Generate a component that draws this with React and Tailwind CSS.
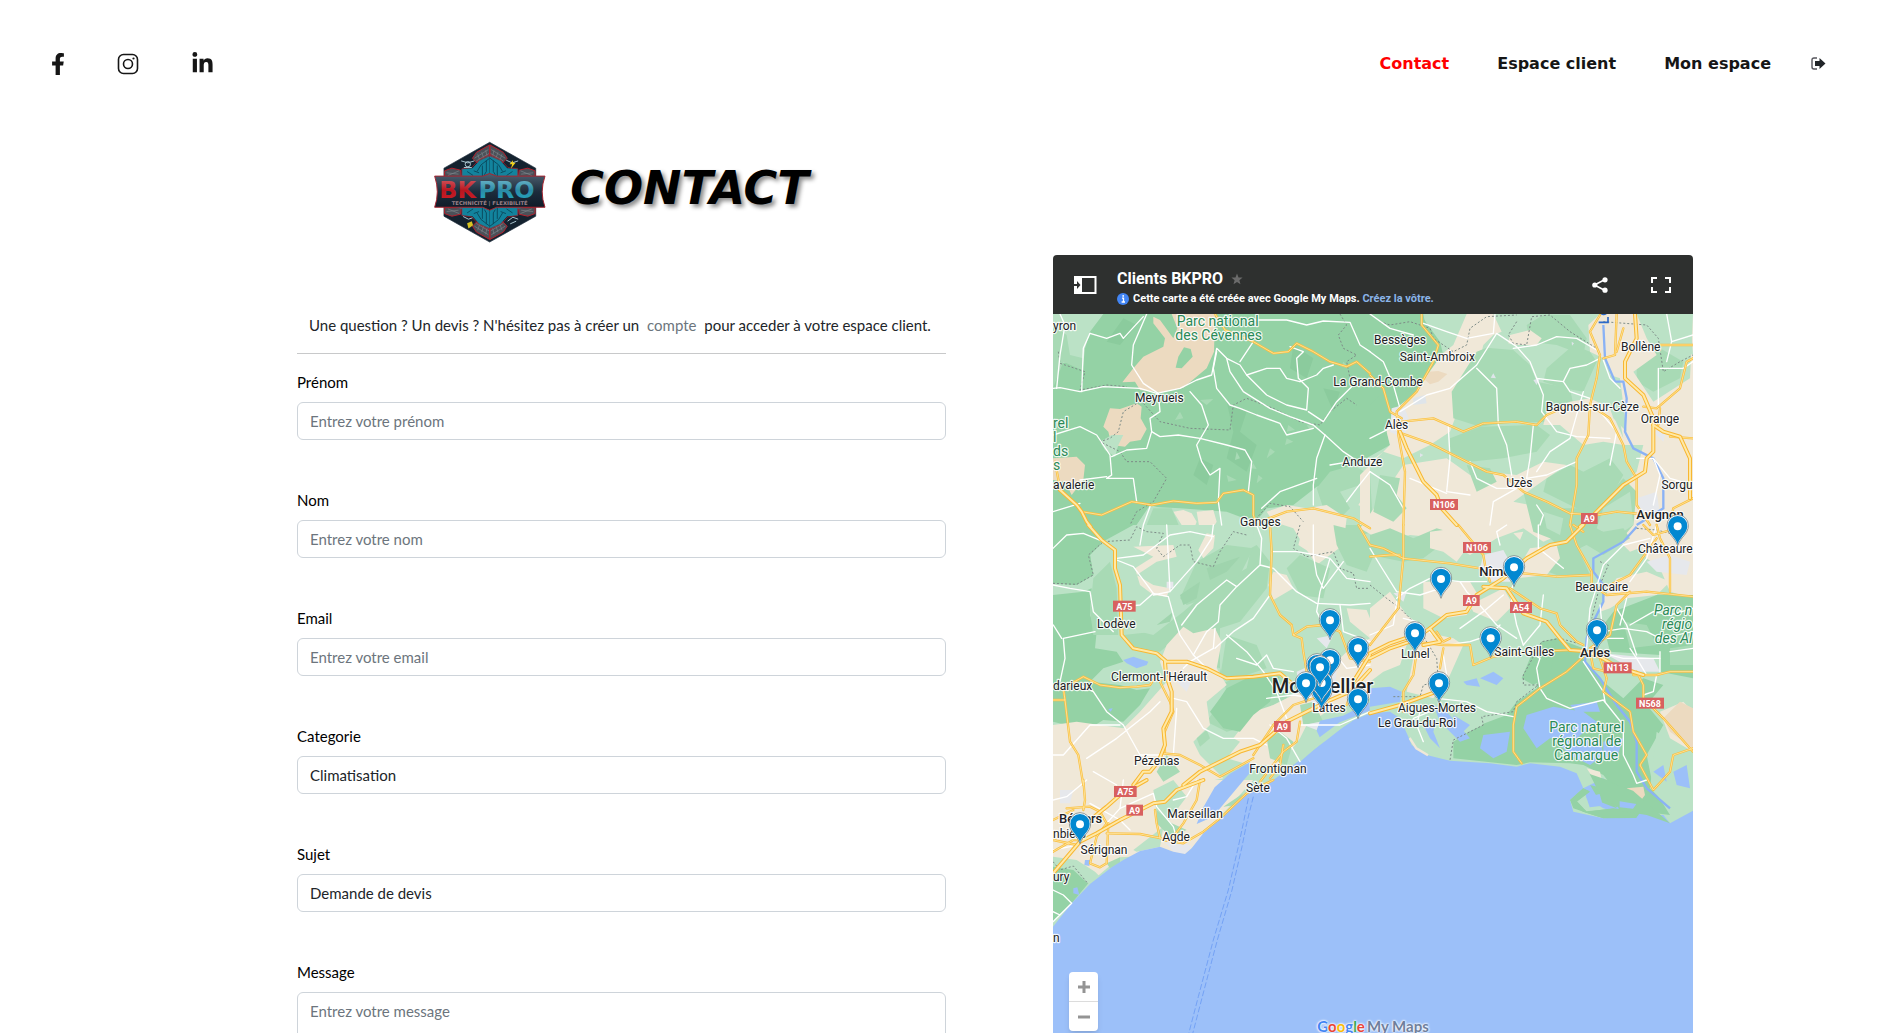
import React from "react";
import { FaFacebookF, FaLinkedinIn } from "react-icons/fa";

/* The map is drawn in five sheets; each has its own origin in the map's units. */
const SHEETS = {
  nw: "translate(-39 -207)",
  ne: "translate(951 -207)",
  w: "translate(-39 633)",
  e: "translate(951 633)",
  s: "translate(-39 1398)",
};

const LIGHT = "#bbe2c6";
const MID = "#a8dab5";
const DARK = "#94d2a5";
const SAND = "#f0e8d8";
const TAN = "#ecdac0";
const WATER = "#9cc0f9";
const URBAN = "#e6e8ec";

const AREAS = {
  nw: [
    [DARK, "M39 207H1140L1200 290 1215 350 1160 420 1080 480 1040 560 1050 600 960 650 930 700 830 725 760 780 680 790 640 840 480 800 400 800 330 780 290 840 280 860 180 900 150 930 160 990 110 1020 39 1015Z"],
    [LIGHT, "M39 207H190L150 260 135 310 128 375 95 350 60 355 39 390Z"],
    [MID, "M39 240L80 270 90 330 130 340 125 375 70 350 39 430Z"],
    [TAN, "M340 215L360 225 400 280 412 250 395 207H525L522 320 500 370 430 428 365 442 300 435 285 410 247 412 280 370 310 335 370 305 375 280 340 235Z"],
    [DARK, "M432 307L452 312 458 335 425 370 407 368 415 335Z"],
    [TAN, "M210 490L240 492 290 475 305 485 302 520 320 552 302 585 270 590 255 605 215 600 205 560 190 545Z"],
    [LIGHT, "M180 590L215 570 250 570 235 600 225 635 195 615Z"],
    [TAN, "M39 640L110 635 135 660 130 705 95 750 75 710 39 705Z"],
    [MID, "M830 730L870 680 940 660 990 690 1000 860 930 880 880 850 820 860 850 790Z"],
    [LIGHT, "M900 740L960 720 990 700V840H880L930 790Z"],
    [LIGHT, "M290 840L330 785 420 790 560 800 640 830V870H290Z"],
    [SAND, "M400 800L430 795 455 805 470 830 455 870 425 840Z M470 800L520 795 530 830 500 880 480 860Z M680 800L740 780 800 790 860 780 920 820 910 900 830 960 790 900 760 850 700 830Z"],
    [SAND, "M965 690L990 680V800L955 780 980 740Z"],
    [MID, "M340 790L395 790 420 850 350 870 320 840Z"],
    ["#8bcb9d", "M560 470L620 500 600 560 650 600 620 680 560 640 580 560Z M760 300L820 340 800 400 750 370Z M480 640L520 660 500 720 460 690Z M850 430L900 440 880 500Z M250 220L290 240 240 300 200 290Z"],
    [MID, "M690 610L705 620 680 640Z M745 540L765 555 740 560Z M590 620L600 640 585 645Z M655 690L668 700 650 715Z M480 465L520 462 500 480Z M800 540L830 545 810 555Z M740 580L760 590 735 600Z M640 655L650 672 630 670Z M910 350L930 370 905 365Z M560 690L590 705 565 710Z M420 500L430 520 405 525Z"],
  ],
  ne: [
    [SAND, "M290 207H370L395 260 370 270 340 300 320 380 250 440 255 520 240 560 180 600 100 640 40 620 0 650V840H-30V690L60 600 50 560 80 490 140 440 200 340 250 300Z"],
    [TAN, "M175 380L205 378 232 387 205 410 180 418 160 400Z"],
    [MID, "M320 320L350 308 430 315 480 360 500 410 600 430 610 480 530 530 400 535 330 545 250 520 245 440Z"],
    [MID, "M470 240L520 210 600 210 650 280 640 330 560 300 480 290Z M530 370L610 300 660 320 680 350 640 440 580 430 520 410Z"],
    [MID, "M240 580L330 545 500 540 540 570 500 620 400 640 300 650 240 620Z"],
    [MID, "M530 700L600 660 640 680 720 640 760 690 720 760 640 800 520 740Z"],
    [MID, "M800 340L870 310 940 350 930 400 850 440 800 410Z"],
    [DARK, "M0 207H160L170 260 205 300 200 350 150 420 80 460 30 450 0 480Z"],
    [SAND, "M420 270L480 255 515 280 500 300 440 300 415 295Z"],
    [SAND, "M655 240L690 207H800L830 280 860 330 790 380 850 470 960 400 969 207 969 910 860 890 780 920 700 840 760 720 800 680 820 600 760 600 700 590 640 600 570 540 520 540 530 500 600 470 660 460 720 490 760 580 720 380 700 340 660 320Z"],
    [LIGHT, "M690 380L750 400 770 560 730 520 700 430Z M830 207L960 207 969 330 860 280Z"],
    [SAND, "M100 660L230 640 300 690 350 680 440 690 520 650 590 660 530 700 430 770 480 780 600 810 590 860 520 890 460 850 380 880 300 930 220 880 120 870 40 890 -30 850 60 720Z"],
    [MID, "M30 690L90 700 80 750 110 790 70 830 10 800Z M290 660L360 670 380 710 320 740Z"],
    [MID, "M460 740L560 790 640 790 700 770 760 700 800 740 790 840 740 900 660 890 600 930 540 880 490 860Z"],
    [LIGHT, "M700 790L780 740 790 840 730 880 680 850Z M520 800L580 820 570 870 530 850Z"],
    [URBAN, "M65 490L100 480 120 530 100 580 60 560Z M850 560L890 550 880 590Z M800 760L860 740 870 810 820 830Z"],
    ["#dfe5ea", "M370 385L378 400 362 398Z M490 405L510 400 500 420Z M130 460L165 450 170 475 130 480Z M150 625L160 630 150 637Z M605 290L612 295 606 302Z"],
  ],
  w: [
    [DARK, "M39 0H275L180 55 150 90 160 150 110 180 39 175Z"],
    [DARK, "M39 210L130 200 155 190 150 270 170 320 165 370 230 380 250 410 190 430 150 470 240 480 290 495 330 490 300 540 250 590 190 585 150 610 80 600 39 590Z"],
    [MID, "M160 160L210 110 230 190 235 330 160 330 150 260Z M250 330L340 320 400 220 520 130 650 60 690 110 680 190 600 290 540 310 540 480 600 450 700 445 750 470 740 520 700 540 640 600 560 620 500 590 560 500 540 430 460 410 420 330 360 380 270 370Z"],
    [LIGHT, "M180 55L280 0H600L640 40 620 130 500 200 430 260 340 330 260 310 250 190 230 80Z"],
    [MID, "M470 110L560 60 640 70 600 150 500 220 440 240 420 220Z M780 90L870 130 850 220 780 210 740 130Z M560 330L650 360 680 430 620 450 540 460Z"],
    [MID, "M880 0L960 20 1010 70 980 140 920 120 890 60Z"],
    [SAND, "M500 25L525 30 520 70 490 100 475 75Z M280 65L400 60 410 95 350 110 290 150 340 180 390 190 380 215 340 210 300 180 285 130 340 95Z M700 140L740 150 760 190 700 225 685 180Z M790 0H880V60L830 95 775 60Z M920 250L980 255 990 280V340L930 290Z"],
    [SAND, "M430 305L460 325 525 310 545 350 530 430 560 480 500 530 510 600 460 650 480 690 550 760 450 780H39V600L110 590 180 600 250 610 300 560 380 470 360 410 380 360Z"],
    [SAND, "M640 560L700 540 800 490 860 440 920 380 990 340V520L860 560 800 600 780 640 720 720 630 720 560 700 600 650 580 640Z"],
    [DARK, "M510 560L540 520 560 490 620 460 720 455 700 490 690 530 640 570 600 620 550 610Z"],
    [MID, "M470 640L500 615 510 640 480 665Z M680 640L720 620 760 650 740 720 690 700Z M380 690L420 740 370 770 350 740Z M780 540L820 530 850 590 790 600Z"],
    [URBAN, "M770 440L860 400 890 440 880 520 830 540 780 510Z M830 340L880 330 860 370Z M380 170H400V190H380Z M400 460L460 455 440 500Z M790 600L840 590 830 615Z"],
    [WATER, "M250 405L280 395 325 410 320 420 290 430 260 415Z M205 552L218 550 212 560Z"],
    ["#9fd4ad", "M500 130L600 95 560 140 510 165Z M420 210L480 170 470 220 430 240Z M400 260L350 300 390 290Z"],
  ],
  e: [
    [MID, "M0 30L60 10 130 40 200 10 270 30 280 60 200 70 160 100 100 110 0 90Z M640 0L700 20 760 10 780 40 700 90 650 60 600 80 560 40Z M500 70L620 60 660 150 560 150 480 120Z"],
    [SAND, "M180 20L260 10 290 70 260 110 220 80 180 70Z M430 25L460 20 450 45Z M480 70L560 60 570 100 530 150 440 160 450 120Z M160 170L300 170 330 220 290 270 220 280 160 250Z M0 250L60 200 110 270 190 330 120 330 90 420 40 440 0 470Z M300 240L400 190 430 240 380 290 310 260Z M160 320L250 340 280 360 240 450 190 520 110 500 130 400Z M740 160L830 140 900 170 860 210 770 220 720 250 690 260 700 220Z M790 30L850 10 900 30 969 10V220L900 200 870 130 830 100Z"],
    [URBAN, "M340 90L400 75 430 130 420 170 360 170 330 130Z M830 110L900 90 960 110 950 150 860 140Z M700 385L850 400 870 440 800 440 730 400Z M70 205L110 200 100 230Z"],
    [DARK, "M860 210H969V460L870 440 870 390 720 380 700 300 730 260Z"],
    [MID, "M760 290L830 300 860 360 780 370Z M900 370L969 360V420H900Z"],
    [DARK, "M515 350L560 340 640 370 640 400 700 470 760 520 820 460 880 480 830 540 880 600 830 690 850 790 900 870 820 860 740 800 700 750 640 720 600 715 480 712 440 720 250 700 250 650 330 600 410 570 440 530 500 490 505 400Z"],
    [DARK, "M455 460L480 400 515 350 560 350 540 450 490 480Z"],
    [LIGHT, "M150 540L300 570 340 600 250 640 230 700 160 680 120 640 90 560Z"],
    [LIGHT, "M860 620L940 680 969 700V830L900 850 840 790Z"],
    [SAND, "M650 730L690 740 700 790 740 830 700 790 670 760Z M870 560L940 530 969 560V680L900 640Z"],
    [TAN, "M880 580L930 530 969 550V670L900 620Z M770 790L820 785 825 810 810 830Z"],
    [WATER, "M280 470L320 460 330 485 290 480Z M330 460L370 440 400 460 380 480Z M0 490L60 485 95 500 90 530 0 545Z M470 570L550 545 640 560 680 590 620 640 540 640 500 670 460 610Z M340 630L420 620 410 680 370 700 330 670Z M250 570L300 600 260 640Z M560 650L690 640 700 690 660 720 600 690Z M160 600L200 580 190 620 210 670 180 640Z M190 540L230 560 300 640 270 650 210 590Z M700 650L760 640 740 700 700 700Z M600 540L680 530 690 560 620 560Z M910 740L950 720 960 790 920 780Z M850 740L880 720 890 770Z"],
    [WATER, "M640 790L700 760 740 810 820 830 870 870 800 880 700 850 650 820Z"],
    [DARK, "M600 825L640 790 660 800 620 830 650 860 730 850 810 860 800 880 700 880 640 860 610 850Z M660 780L700 790 740 850 690 830Z M720 790L780 800 840 860 750 850Z"],
  ],
  s: [
    [DARK, "M39 250L90 255 145 310 95 370 39 425Z"],
    [LIGHT, "M39 230L110 240 165 275 180 290 145 312 100 270 39 260Z M280 210L370 140 360 200 290 215Z M340 30L400 0 440 50 380 130 350 100Z"],
    [MID, "M200 250L240 232 240 250 210 265Z M350 90L395 130 440 150 390 170 350 130Z M550 80L610 40 590 75Z"],
    [URBAN, "M370 180L420 180 455 200 435 222 400 215Z M60 30L100 30 90 70 60 70Z"],
    [WATER, "M135 240L150 240 148 258 133 255Z M100 325L112 322 118 345 100 340Z"],
  ],
};

const SEA =
  "M0 1838L56 1768 111 1710 176 1660 211 1638 261 1611 321 1598 361 1613 396 1620 416 1603 451 1558 501 1513 571 1443 620 1425 665 1395 741 1338 821 1278 891 1223 951 1198 1011 1193 1041 1213 1066 1268 1076 1293 1121 1323 1191 1340 1311 1348 1391 1358 1431 1348 1521 1358 1571 1378 1591 1423 1551 1458 1561 1493 1651 1513 1781 1503 1831 1503 1851 1528 1920 1490V2400H0Z M485 1420L530 1380 590 1345 605 1360 575 1395 480 1508 431 1530 451 1480Z M791 1250L801 1220 870 1205 950 1165 950 1190 860 1225 800 1270Z";

const LANES = {
  nw: [
    "M39 430L60 428 120 440 190 425 250 428 300 430 350 445 420 430 470 405 515 390 530 310 560 340 600 360 620 390 680 370 720 370 740 400 780 410",
    "M150 265L200 280 240 265 250 280 310 215",
    "M60 207L75 240 60 330 50 430M150 265L130 310 125 440",
    "M320 207L280 300 275 360 310 415 355 445 360 500 330 520 335 560 360 575 415 570 480 580 560 600 615 615 635 650 625 740",
    "M450 440L485 480 505 540 470 600 485 650 510 690 540 670 535 770 545 840",
    "M530 320L520 370 530 430 570 480 600 490 650 510 720 535 740 570 820 550",
    "M560 340L570 380 610 440 690 490 750 515 820 540 855 570 910 620 940 640",
    "M600 350L620 320 640 290M620 390L680 450 740 480 800 495 805 430 775 400 770 340 790 320 750 305",
    "M640 225H740L800 240 850 228 930 232 960 300 990 320",
    "M855 570L830 640 820 720 820 780M870 660L930 650M830 700L720 740 665 790",
    "M39 570L120 545 170 570 210 630 215 690 200 700 280 700 290 770",
    "M120 705L200 695M215 635L260 615 320 610 335 560M330 785L310 840 300 900",
    "M805 500L850 530 890 470 940 420M780 410L830 390 850 370 880 360",
    "M990 680L950 730 920 770M39 800L120 775",
  ],
  ne: [
    "M0 320L40 350 70 420 90 490M90 500L170 450 240 430 320 360 380 265 440 305 480 350 500 400 520 450 515 500",
    "M160 235L230 260 290 280 370 265 375 207M430 310L500 300 560 275 620 280 680 315",
    "M320 370L380 430 385 540 410 600 425 690M500 400L580 410 600 440 660 460M580 410L600 370 650 360 690 340",
    "M490 540L480 640 470 700 530 690 620 650M235 545L240 640 230 740 300 750M515 500L560 560 620 575 720 580",
    "M0 580L70 545 95 570M300 650L320 700 380 730 440 730M640 440L600 580 540 620 500 680",
    "M870 370H940L969 350M865 490V370M700 345L720 400 750 430M0 680L60 720 100 790 100 840M120 700L230 745",
    "M660 470L690 500 740 560 720 660M440 730L370 770 360 840M500 780L520 810 510 840",
    "M850 640L870 690 850 780M890 207L905 290 969 270M905 290L890 350",
    "M0 207L60 250 130 270M800 640L850 640 900 700 969 720",
  ],
  w: [
    "M39 70L80 30 130 25 190 50M230 100L310 90 390 30 450 20 520 35M230 105L280 125 340 205 300 240 250 245",
    "M39 180L90 190 150 200 160 260 220 320M70 340L165 320M70 340L75 400 60 470M65 340L40 300",
    "M520 0L515 40 470 110 390 200 340 210M380 0L390 200M340 205L385 215 400 270 420 330 460 390 500 430",
    "M425 300L470 240 560 165 590 185 540 240 535 290 500 320 460 390M590 185L660 120 665 40 650 0M660 120L700 130 770 200 830 235 930 240 990 235",
    "M700 80H770L830 90 870 100 920 160 990 170M870 100L840 200 830 260 870 340M820 0V90L830 150 850 190 910 110",
    "M525 370L580 320 640 280 690 210M560 330L620 380 670 440M525 310L520 370 450 410 430 430",
    "M250 600L200 560 160 500 120 480M140 700L230 640 330 560 360 530M250 600L300 690 370 690M160 740L230 780",
    "M400 520L440 530 490 610 550 640 640 640 680 660M410 550L400 690M240 600L150 600 70 690 39 690",
    "M590 400L650 420 680 390 700 430 760 440M670 440L710 500 740 580M680 520L760 510 820 520",
    "M690 600L740 640 780 710M780 600L850 600 900 600 990 560M900 240L910 320 990 350",
    "M880 380L920 430 990 420",
  ],
  e: [
    "M0 70L30 120 80 200 150 210 210 190M80 220L120 190 180 160 270 170M390 60L380 20 410 0M505 0V70L580 130",
    "M270 170L290 200 320 230 380 300 440 340M270 170H350M270 310L340 260 400 210M440 160L420 200 440 300 460 360",
    "M460 360L510 300 520 210M650 370L660 250 700 120 760 60 840 40M740 250L770 300 800 390M690 240L700 340 760 340",
    "M510 490L530 520 600 550 700 525 760 600 760 690 790 750 800 775 830 765M200 520L290 530 350 560 430 575M510 490L500 430 510 400 480 380",
    "M640 410L700 500 705 530M700 385L760 400 870 400M860 450L850 500 820 510M700 320L760 310 830 320 870 340 969 320",
    "M870 380L870 440M900 380L969 370M780 370L800 400 830 450M150 560L140 600 160 650M130 580L180 560M770 220L750 300",
    "M80 230L70 300 0 330M190 330L140 290 100 280M230 360L300 350 360 330 390 300",
    "M220 390L230 450 210 520M860 0L830 100 780 170M969 250L900 270 850 260 780 300",
  ],
  s: [
    "M39 330L70 345 95 370 39 425M39 395L60 405M340 40L350 80 400 140 410 175M240 85L340 40M150 70L240 120 270 150",
    "M39 210L90 200 120 190M39 60L80 50 140 0M470 0L440 50 400 60M250 0L240 85 200 130",
  ],
};

const TRUNKS = {
  nw: [
    "M525 207L555 255 640 290 700 325 745 320 770 295 820 320 870 350 920 365 950 350 990 385",
    "M125 800L185 810 275 770 335 780 400 768 470 775 530 772 550 745 610 735 640 750 640 810 650 840",
    "M660 830L740 800 820 790 860 800 940 820 990 850",
    "M45 650L60 730",
  ],
  ne: [
    "M155 207L155 240 205 300 190 350 140 440 80 500 85 570 105 680 100 840M0 390L40 430 60 500 95 520",
    "M95 530L190 520 280 560 340 535 440 530 500 540 530 510 600 480 660 485",
    "M95 565L180 595 260 635 350 680 400 690 460 740 530 770 600 805 680 810 740 800 840 810",
    "M690 210L660 260 690 330 680 400 660 480 655 570 620 640 620 720 600 840M740 207L735 330 700 340",
    "M740 320L760 250M820 485L860 490 930 430 950 350 969 340M870 300H969M660 480L720 520 760 600 770 650 800 700 800 780 840 840",
    "M870 490L865 540M969 580L900 575M900 840L910 790 969 760",
  ],
  w: [
    "M690 0L695 80 690 210 720 270 755 300 760 330 785 340 790 380 800 440M760 330L800 305 850 300 900 320 930 400 990 410",
    "M39 525L75 525 70 490 130 455 180 480 240 488 290 485 330 480 350 450M75 525L90 650 115 690 130 780",
    "M370 685L420 690 480 720 540 755 640 700M640 690L700 600 760 540 820 520M730 660L720 720 690 760",
    "M385 440L360 470 390 530 400 560 370 630 375 680M780 590L770 650 730 680 660 770",
    "M955 0L990 60M940 480L920 540",
  ],
  e: [
    "M0 60L40 70 100 100 240 115 330 130M100 0L100 100 85 250 0 360M265 0L340 90 345 120 360 170M0 95L60 90 90 90",
    "M460 145L560 155 660 150M600 0L620 60 665 140 665 180 710 210 830 200 969 215M610 0L640 20",
    "M420 190L510 250 560 265 570 300 620 350 640 360M370 395L310 420 300 360 220 360 130 350M370 395L480 380 600 375",
    "M640 395L590 440 510 490 440 545 430 600 430 680 455 715M690 400L710 460 700 500 780 560 790 620 830 690 810 720 850 795 900 740 910 690 969 670",
    "M220 370L210 430M140 380L130 450 100 500 100 560M200 320L220 350 240 340M660 380L670 430 710 440",
    "M800 440L820 480 820 520 880 580 969 680M790 450L860 450 900 440 969 440M710 185L780 150 860 40M860 0L870 40 900 100 900 200",
    "M780 200L740 240 720 330 660 370M820 0L850 30 920 10",
  ],
  s: [
    "M80 85L150 80 180 95 200 130 170 170 150 250 180 262 200 250 205 130M200 160L300 162 365 175M345 90L350 130 360 175",
    "M130 0L135 60 130 90M480 0L470 60 430 130 400 170M370 180L430 190 490 155 540 115 620 40 700 0",
    "M39 120L100 90M39 215L100 180 120 180M39 180L110 195",
  ],
};

const MOTORWAYS = {
  nw: ["M60 735L110 780 125 800 140 830 152 845"],
  ne: [
    "M795 207L800 280 765 350 765 400 820 450 850 520 850 620 830 640 825 680 760 720 700 780 660 820 630 845",
    "M850 540L880 560 930 575 960 640 960 760",
    "M90 560L110 610 135 660 160 710 200 750 215 790 260 840",
  ],
  w: [
    "M145 0L185 45 225 75 225 130 240 180 245 330 280 370 350 385 380 410 440 410 500 430 560 460 640 455 720 445 750 470",
    "M375 410L378 450 395 500 395 560 370 610 375 660 355 710 330 740 310 740 280 780",
    "M430 780L480 740 520 720 600 680 660 660 740 590 810 555 860 530 930 500 990 435",
    "M940 470L990 390",
  ],
  e: [
    "M0 400L60 370 120 350 180 310 230 270 290 260 320 210 400 160 470 100 540 60 590 50 640 0",
    "M340 185L410 190 460 265 530 290 570 340 600 375 640 378 690 395 740 425 820 450",
    "M0 385L60 355 120 335M180 310L210 350 160 360",
    "M0 565L90 540 200 500",
  ],
  s: [
    "M39 280L120 185 170 160 240 120 340 70 375 65 410 30 490 0",
    "M320 0L240 45 200 80 150 120 120 160",
  ],
};

const BORDERS = {
  nw: [
    "M55 320L60 355 135 380 120 435 200 420 260 425M300 470L250 500 235 560 210 580 180 590 240 620 260 650 330 650 380 700 340 770 290 800 270 840",
    "M310 475L360 530 450 550 570 555 580 480 620 460 700 490 780 530 840 540 870 500 920 460 950 480",
    "M900 207L920 240 895 270 910 310 950 330 920 350 930 400",
    "M640 830L690 775 750 785 790 830",
  ],
  ne: ["M30 230L60 240 120 230 180 250 190 280 250 320 290 300 300 250 350 215 440 210", "M440 230L415 270 430 295 470 300 485 215 540 210 600 260 680 310", "M700 230L830 240 865 280 880 380 930 350 969 330"],
  w: ["M39 175L110 178 160 150 145 90 190 50 270 45 290 5 320 20 370 25 350 70 370 95 420 60 450 60 460 110 520 125 540 80 580 20 620 30", "M780 0L760 70 800 95 880 80 900 130 940 145 950 190 990 190"],
  e: ["M0 180L50 220 90 250 140 300 200 400 205 470 160 480 150 515 70 515", "M640 360L570 340 515 350 460 450 460 480 505 480 440 530 430 560 335 575 340 600 250 645 240 705", "M800 10L860 15 920 30M690 110L715 120 690 180 665 280"],
  s: ["M39 245L60 270 100 258 145 312"],
};

const RIVERS = [
  ["ne", "M700 240L705 340 735 410 760 410 770 460 765 560 790 610 850 640 880 700 880 790 800 840"],
  ["e", "M800 5L760 50 670 100 670 140 700 180 700 230 670 290 650 340 645 410 690 460 740 540 780 590 800 650 800 740 830 790 900 850"],
];

const PLACES = {
  nw: [
    [39, 255, "yron", "start"],
    [358, 472, "Meyrueis"],
    [880, 424, "La Grand-Combe", "start"],
    [907, 664, "Anduze", "start"],
    [39, 732, "avalerie", "start"],
    [661, 843, "Ganges"],
  ],
  ne: [
    [90, 298, "Bessèges"],
    [202, 349, "Saint-Ambroix"],
    [812, 318, "Bollène"],
    [667, 499, "Bagnols-sur-Cèze"],
    [870, 535, "Orange"],
    [80, 553, "Alès"],
    [448, 727, "Uzès"],
    [968, 733, "Sorgu", "end"],
  ],
  w: [
    [229, 309, "Lodève"],
    [357, 469, "Clermont-l'Hérault"],
    [39, 496, "darieux", "start"],
    [350, 720, "Pézenas"],
    [714, 745, "Frontignan"],
    [867, 561, "Lattes"],
  ],
  e: [
    [968, 84, "Châteaure", "end"],
    [695, 198, "Beaucaire"],
    [136, 399, "Lunel"],
    [463, 393, "Saint-Gilles"],
    [201, 561, "Aigues-Mortes"],
    [141, 607, "Le Grau-du-Roi"],
  ],
  s: [
    [654, 36, "Sète"],
    [465, 114, "Marseillan"],
    [408, 184, "Agde"],
    [192, 222, "Sérignan"],
    [39, 174, "nbiers", "start"],
    [39, 304, "ury", "start"],
    [39, 487, "n", "start"],
  ],
};

const CITIES = {
  ne: [[870, 821, "Avignon"]],
  e: [
    [328, 154, "Nîmes", "start"],
    [675, 396, "Arles"],
  ],
  s: [[122, 130, "Béziers"]],
};

const PARKS = {
  nw: [
    [533, 243, "Parc national"],
    [536, 286, "des Cévennes"],
    [39, 549, "rel", "start"],
    [39, 591, "l", "start"],
    [39, 633, "ds", "start"],
    [39, 675, "s", "start"],
  ],
  e: [
    [650, 621, "Parc naturel"],
    [650, 664, "régional de"],
    [648, 706, "Camargue"],
  ],
};

const ITALIC_PARKS = {
  e: [
    [967, 269, "Parc n", "end"],
    [967, 311, "régio", "end"],
    [967, 353, "des Al", "end"],
  ],
};

const SHIELDS = {
  ne: [
    [222, 779, "N106", 84],
    [658, 821, "A9", 50],
  ],
  w: [
    [253, 244, "A75", 68],
    [727, 605, "A9", 50],
  ],
  e: [
    [321, 68, "N106", 84],
    [304, 227, "A9", 50],
    [453, 248, "A54", 66],
    [743, 429, "N113", 84],
    [840, 535, "N568", 84],
  ],
  s: [
    [256, 35, "A75", 68],
    [284, 91, "A9", 50],
  ],
};

const PINS = [
  ["w", 870, 340],
  ["w", 870, 460],
  ["w", 831, 475],
  ["w", 954, 424],
  ["w", 845, 550],
  ["w", 845, 528],
  ["w", 798, 529],
  ["w", 840, 481],
  ["w", 954, 577],
  ["e", 213, 216],
  ["e", 432, 181],
  ["e", 135, 379],
  ["e", 362, 394],
  ["e", 207, 529],
  ["e", 681, 370],
  ["e", 923, 58],
  ["s", 120, 187],
];

function Sheets({ data, children }) {
  return Object.entries(data).map(([key, items]) => (
    <g key={key} transform={SHEETS[key]}>
      {items.map((item, i) => (
        <React.Fragment key={i}>{children(item)}</React.Fragment>
      ))}
    </g>
  ));
}

function Roads({ data, color, width }) {
  return (
    <g fill="none" stroke={color} strokeWidth={width} strokeLinejoin="round" strokeLinecap="round">
      <Sheets data={data}>{(d) => <path d={d} />}</Sheets>
    </g>
  );
}

function Labels({ data, size, color, weight }) {
  return (
    <g
      fontSize={size}
      fontWeight={weight}
      fill={color}
      stroke="#fff"
      strokeOpacity="0.85"
      strokeWidth="7"
      strokeLinejoin="round"
      paintOrder="stroke"
    >
      <Sheets data={data}>
        {([x, y, text, anchor]) => (
          <text x={x} y={y} textAnchor={anchor || "middle"}>
            {text}
          </text>
        )}
      </Sheets>
    </g>
  );
}

function MapDrawing() {
  return (
    <svg
      viewBox="0 0 1920 2178"
      preserveAspectRatio="xMidYMin slice"
      className="block h-full w-full font-[Roboto,sans-serif]"
      role="img"
      aria-label="Carte des clients"
    >
      <rect width="1920" height="2400" fill={LIGHT} />
      <Sheets data={{ s: [SAND] }}>{(c) => <path fill={c} d="M39 0H640L440 222 240 232 145 312 39 240Z" />}</Sheets>
      <Sheets data={AREAS}>{([fill, d]) => <path fill={fill} d={d} />}</Sheets>
      <path d={SEA} fill={WATER} />
      <g fill={DARK}>
        <path d="M1551 1458L1590 1423 1610 1432 1572 1462 1600 1492 1680 1484 1762 1492 1750 1512 1651 1513 1590 1493Z" />
        <path d="M1610 1380L1670 1400 1740 1460 1690 1480 1640 1440Z M1660 1400L1740 1430 1851 1528 1781 1503 1700 1490Z" />
      </g>
      <g fill={WATER}>
        <path d="M1600 1450L1640 1440 1650 1475 1610 1480Z M1700 1462L1750 1470 1740 1484 1700 1480Z" />
      </g>
      <path d="M740 1340L830 1262 895 1220" stroke={LIGHT} strokeWidth="6" fill="none" />
      <path d="M1070 1272L1090 1303 1125 1324" stroke={SAND} strokeWidth="7" fill="none" />
      <g fill="none" strokeWidth="7" stroke="#8ab2f5">
        {RIVERS.map(([key, d]) => (
          <path key={key} d={d} transform={SHEETS[key]} />
        ))}
      </g>
      <g fill="none" stroke="#7d8b87" strokeWidth="3" strokeDasharray="6 6">
        <Sheets data={BORDERS}>{(d) => <path d={d} />}</Sheets>
      </g>
      <Roads data={LANES} color="#ffffff" width={4} />
      <Roads data={TRUNKS} color="#fabf3e" width={7} />
      <Roads data={TRUNKS} color="#fff0bd" width={2} />
      <Roads data={MOTORWAYS} color="#f8b732" width={12} />
      <Roads data={MOTORWAYS} color="#ffe9a6" width={6} />
      <g transform={SHEETS.s} fill="none" stroke="#74a2f5" strokeWidth="3" strokeDasharray="18 7">
        <path d="M625 55L610 130 595 200 565 330 520 480 475 650 445 765" />
        <path d="M640 50L620 130 606 200 576 330 532 480 487 650 457 765" />
      </g>
      <g transform={SHEETS.ne} fill="none" stroke="#2b69c9" strokeWidth="5">
        <path d="M714 216V232H686M710 190A8 8 0 1 1 692 204" />
      </g>
      <g fontSize="27" fontWeight="700" fill="#fff" textAnchor="middle">
        <Sheets data={SHIELDS}>
          {([x, y, text, w]) => (
            <>
              <rect x={x - w / 2} y={y - 17} width={w} height="33" fill="#d8605f" />
              <text x={x} y={y + 10}>
                {text}
              </text>
            </>
          )}
        </Sheets>
      </g>
      <Labels data={PARKS} size={42} color="#2b8a57" weight={400} />
      <g fontStyle="italic">
        <Labels data={ITALIC_PARKS} size={42} color="#2b8a57" weight={400} />
      </g>
      <Labels data={PLACES} size={36} color="#202124" weight={400} />
      <Labels data={CITIES} size={39} color="#202124" weight={500} />
      <Labels data={{ w: [[695, 503, "Montpellier", "start"]] }} size={60} color="#202124" weight={500} />
      {PINS.map(([key, x, y]) => (
        <g key={`${key}${x}-${y}`} transform={SHEETS[key]}>
          <g transform={`translate(${x} ${y})`}>
            <path
              d="M0 4C-8 -22 -32 -30 -32 -57A32 32 0 0 1 32 -57C32 -30 8 -22 0 4Z"
              fill="#fff"
              stroke="#5f6b70"
              strokeWidth="2"
            />
            <path d="M0 0C-6 -22 -29 -32 -29 -56A29 29 0 0 1 29 -56C29 -32 6 -22 0 0Z" fill="#0288d1" />
            <circle cy="-54" r="12" fill="#fff" />
          </g>
        </g>
      ))}
    </svg>
  );
}

function Badge() {
  const quarter = (
    <>
      <path d="M124 60L136 42 176 20V54L138 74Z" fill="#4b5058" stroke="#b5202c" strokeWidth="3" />
      <path d="M130 60L172 34M136 68L174 46M140 48L146 66M152 42L158 60M164 36L168 54" stroke="#7d858c" strokeWidth="2" />
      <path d="M40 98L62 90 88 96 90 116H40Z" fill="#4b5058" stroke="#b5202c" strokeWidth="3" />
      <path d="M46 104L82 108M50 112L84 98" stroke="#7d858c" strokeWidth="2" />
      <path d="M92 92L124 90 144 68 176 54V118H70L92 112Z" fill="#12839d" />
      <path d="M176 60L150 80 138 100M166 66V100M154 82V116M128 98L144 104M108 100L126 112M166 100L160 110" stroke="#0b4c60" strokeWidth="3" fill="none" />
      <path d="M92 116V92L122 88 142 66 176 48" stroke="#b5202c" strokeWidth="2" fill="none" />
    </>
  );
  return (
    <svg viewBox="8 8 338 308" className="w-28 shrink-0" role="img" aria-label="BKPRO">
      <defs>
        <linearGradient id="plate" x1="0" y1="0" x2="0" y2="1">
          <stop offset="0" stopColor="#4e6070" />
          <stop offset="0.5" stopColor="#1c2c3c" />
          <stop offset="1" stopColor="#0d1824" />
        </linearGradient>
        <linearGradient id="blueText" x1="0" y1="0" x2="0" y2="1">
          <stop offset="0" stopColor="#7bbdd0" />
          <stop offset="0.5" stopColor="#2b8ba6" />
          <stop offset="1" stopColor="#1fb0c8" />
        </linearGradient>
        <linearGradient id="redText" x1="0" y1="0" x2="0" y2="1">
          <stop offset="0" stopColor="#d8646a" />
          <stop offset="0.5" stopColor="#b9161f" />
          <stop offset="1" stopColor="#d32029" />
        </linearGradient>
      </defs>
      <path d="M176 12L315 90V235L176 313 38 235V90Z" fill="#14222f" stroke="#1d2b39" strokeWidth="2" />
      {quarter}
      <g transform="matrix(-1 0 0 1 353 0)">{quarter}</g>
      <g transform="matrix(1 0 0 -1 0 325)">{quarter}</g>
      <g transform="matrix(-1 0 0 -1 353 325)">{quarter}</g>
      <g fill="none" stroke="#a9c4cf" strokeWidth="3">
        <circle cx="110" cy="78" r="8" />
        <path d="M90 68L110 74 130 68M98 88L122 88M226 66L244 74 262 68M96 236L112 244 124 240M230 250L246 238 262 244M238 258L256 250" />
      </g>
      <path d="M246 66L236 78H244L240 92 254 74H246Z" fill="#f2d21a" />
      <path d="M108 256L122 250 126 262 112 272Z" fill="#d8c422" />
      <path d="M10 114H155L176 106 197 114H343Q326 162 343 208H197L176 217 155 208H10Q26 162 10 114Z" fill="url(#plate)" stroke="#a52430" strokeWidth="3" />
      <g fontFamily="'DejaVu Sans', sans-serif" fontWeight="700">
        <text x="24" y="181" fontSize="72" fill="url(#redText)">
          BK
        </text>
        <text x="142" y="181" fontSize="72" fill="url(#blueText)">
          PRO
        </text>
        <text x="176" y="200" fontSize="16" fill="#9a8088" textAnchor="middle">
          TECHNICITÉ | FLEXIBILITÉ
        </text>
      </g>
    </svg>
  );
}

const controlClass =
  "block w-full appearance-none rounded-md border border-[#ced4da] bg-white px-3 text-[15px] leading-6 text-[#212529] placeholder:text-[#6c757d]";

function Field({ id, label, children }) {
  return (
    <div className="mb-12">
      <label htmlFor={id} className="mb-2 block leading-6 text-black">
        {label}
      </label>
      {children}
    </div>
  );
}

const NAV = [
  ["Contact", "text-[#ff0000]"],
  ["Espace client", "text-[#161616]"],
  ["Mon espace", "text-[#161616]"],
];

export default function App() {
  return (
    <div className="min-h-screen bg-white font-[Lato,sans-serif] text-[15px] text-[#212529]">
      <header className="flex h-[127px] items-center justify-between pr-[65px] pl-[50px]">
        <div className="flex items-center gap-[52px] text-[#161616]">
          <a href="#facebook" aria-label="Facebook" className="flex w-4 justify-center">
            <FaFacebookF size={22} />
          </a>
          <a href="#instagram" aria-label="Instagram" className="flex w-5 justify-center">
            <svg viewBox="0 0 22 22" className="size-[22px] shrink-0" fill="none" stroke="currentColor" strokeWidth="1.6">
              <rect x="1.500" y="1.500" width="19" height="19" rx="5" />
              <circle cx="11" cy="11" r="4.500" />
              <circle cx="16.500" cy="5.500" r="1.100" fill="currentColor" stroke="none" />
            </svg>
          </a>
          <a href="#linkedin" aria-label="LinkedIn" className="flex w-6 justify-center">
            <FaLinkedinIn size={23} />
          </a>
        </div>
        <nav className="flex items-center gap-12 font-['DejaVu_Sans',sans-serif] text-base font-bold">
          {NAV.map(([label, color]) => (
            <a key={label} href="#nav" className={color}>
              {label}
            </a>
          ))}
          <a href="#deconnexion" aria-label="Déconnexion" className="-ml-2">
            <svg viewBox="0 0 15 13" className="h-[13px] w-[15px]">
              <path d="M6 1H3Q1 1 1 3V10Q1 12 3 12H6" fill="none" stroke="#55555c" strokeWidth="1.4" />
              <path d="M4 4H8.500V1L14.500 6.500 8.500 12V9H4Z" fill="#212529" />
            </svg>
          </a>
        </nav>
      </header>

      <main className="flex items-start gap-[107px] pr-[198px] pl-[297px]">
        <section className="min-w-0 flex-[649]">
          <div className="flex items-start justify-center gap-6 pt-[14px]">
            <Badge />
            <h1 className="pt-6 font-['DejaVu_Sans',sans-serif] text-[46px] leading-none font-bold text-black italic [text-shadow:3px_3px_4px_rgba(0,0,0,0.45)]">
              CONTACT
            </h1>
          </div>
          <p className="mt-[70px] px-3 leading-6 whitespace-nowrap">
            Une question ? Un devis ? N'hésitez pas à créer un{" "}
            <a href="#compte" className="px-1 text-[#6c757d]">
              compte
            </a>{" "}
            pour acceder à votre espace client.
          </p>
          <hr className="my-4 border-[#c8c9ca]" />
          <form>
            <Field id="prenom" label="Prénom">
              <input id="prenom" type="text" placeholder="Entrez votre prénom" className={`${controlClass} h-[38px]`} />
            </Field>
            <Field id="nom" label="Nom">
              <input id="nom" type="text" placeholder="Entrez votre nom" className={`${controlClass} h-[38px]`} />
            </Field>
            <Field id="email" label="Email">
              <input id="email" type="email" placeholder="Entrez votre email" className={`${controlClass} h-[38px]`} />
            </Field>
            <Field id="categorie" label="Categorie">
              <select id="categorie" className={`${controlClass} h-[38px]`}>
                <option>Climatisation</option>
              </select>
            </Field>
            <Field id="sujet" label="Sujet">
              <select id="sujet" className={`${controlClass} h-[38px]`}>
                <option>Demande de devis</option>
              </select>
            </Field>
            <Field id="message" label="Message">
              <textarea
                id="message"
                rows={4}
                placeholder="Entrez votre message"
                className={`${controlClass} resize-none py-1.5`}
              />
            </Field>
          </form>
        </section>

        <section className="mt-[128px] flex min-w-0 flex-[640] flex-col overflow-hidden rounded font-[Roboto,sans-serif]">
          <div className="flex h-[59px] items-center bg-[#2e302f] text-white">
            <button type="button" aria-label="Légende" className="ml-5 shrink-0">
              <svg viewBox="0 0 24 20" className="h-5 w-6">
                <rect x="2" y="2" width="20.500" height="16" fill="none" stroke="#fff" strokeWidth="2" />
                <rect x="1" y="1" width="8" height="18" rx="1" fill="#fff" />
                <path d="M0 9H4V6L7.500 10 4 14V11H0Z" fill="#2e302f" />
              </svg>
            </button>
            <div className="ml-5 min-w-0 flex-1 pt-2">
              <h2 className="flex items-center gap-2 text-base leading-5 font-bold">
                Clients BKPRO
                <svg viewBox="0 0 12 12" className="size-3" fill="#6b6b6b">
                  <path d="M6 .5L7.500 4.400 11.600 4.600 8.400 7.200 9.500 11.200 6 9 2.500 11.200 3.600 7.200 .4 4.600 4.500 4.400Z" />
                </svg>
              </h2>
              <p className="flex items-center gap-1 text-[11px] leading-5 font-bold">
                <svg viewBox="0 0 12 12" className="size-3 shrink-0">
                  <circle cx="6" cy="6" r="6" fill="#4285f4" />
                  <path d="M5 5.200H6.500V9M4.600 9H8" stroke="#fff" strokeWidth="1.300" fill="none" />
                  <circle cx="6.200" cy="2.900" r="0.900" fill="#fff" />
                </svg>
                <span className="whitespace-nowrap">
                  Cette carte a été créée avec Google My Maps.{" "}
                  <a href="#mymaps" className="text-[#8ab4e8]">
                    Créez la vôtre.
                  </a>
                </span>
              </p>
            </div>
            <button type="button" aria-label="Partager" className="mr-[43px]">
              <svg viewBox="0 0 16 16" className="size-4" fill="#fff">
                <path d="M2.500 8L13 2.500M2.500 8L13 13.500" stroke="#fff" strokeWidth="1.500" />
                <circle cx="2.800" cy="8" r="2.600" />
                <circle cx="13" cy="2.800" r="2.600" />
                <circle cx="13" cy="13.200" r="2.600" />
              </svg>
            </button>
            <button type="button" aria-label="Plein écran" className="mr-[22px]">
              <svg viewBox="0 0 20 16" className="h-4 w-5">
                <path d="M1 6V1H6M14 1H19V6M19 10V15H14M6 15H1V10" fill="none" stroke="#fff" strokeWidth="2" />
              </svg>
            </button>
          </div>
          <div className="relative h-[726px]">
            <MapDrawing />
            <div className="absolute bottom-[9px] left-4 flex w-[29px] flex-col rounded-sm bg-white shadow-md">
              <button type="button" aria-label="Zoom avant" className="flex h-[29px] items-center justify-center">
                <svg viewBox="0 0 12 12" className="size-3">
                  <path d="M6 0V12M0 6H12" stroke="#949494" strokeWidth="3" />
                </svg>
              </button>
              <button
                type="button"
                aria-label="Zoom arrière"
                className="flex h-[30px] items-center justify-center border-t border-[#dcdcdc]"
              >
                <svg viewBox="0 0 12 12" className="size-3">
                  <path d="M0 6H12" stroke="#949494" strokeWidth="3" />
                </svg>
              </button>
            </div>
            <div className="absolute inset-x-0 bottom-0.5 flex justify-center gap-0.5 font-[Lato,sans-serif] text-[15px] leading-6 [text-shadow:0_0_2px_#fff,0_0_2px_#fff,0_0_3px_#fff]">
              <span className="font-bold">
                <span className="text-[#4285f4]">G</span>
                <span className="text-[#ea4335]">o</span>
                <span className="text-[#fbbc05]">o</span>
                <span className="text-[#4285f4]">g</span>
                <span className="text-[#34a853]">l</span>
                <span className="text-[#ea4335]">e</span>
              </span>
              <span className="font-bold text-[#6f7f9c]">My Maps</span>
            </div>
          </div>
        </section>
      </main>
    </div>
  );
}
